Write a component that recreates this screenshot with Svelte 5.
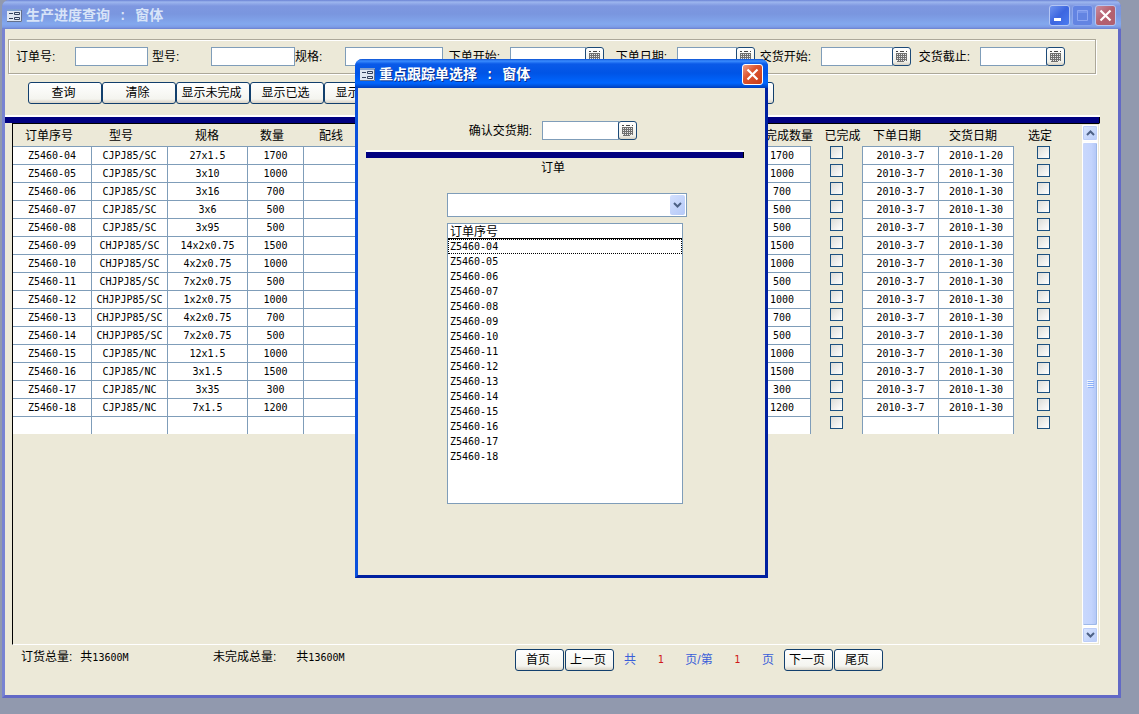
<script lang="ts">
    type Order = {
        id: string;
        model: string;
        spec: string;
        qty: string;
        ordered: string;
        due: string;
        done: boolean;
        selected: boolean;
    };

    const source = [
        ['04', 'CJPJ85/SC', '27x1.5', '1700', '2010-1-20'],
        ['05', 'CJPJ85/SC', '3x10', '1000', '2010-1-30'],
        ['06', 'CJPJ85/SC', '3x16', '700', '2010-1-30'],
        ['07', 'CJPJ85/SC', '3x6', '500', '2010-1-30'],
        ['08', 'CJPJ85/SC', '3x95', '500', '2010-1-30'],
        ['09', 'CHJPJ85/SC', '14x2x0.75', '1500', '2010-1-30'],
        ['10', 'CHJPJ85/SC', '4x2x0.75', '1000', '2010-1-30'],
        ['11', 'CHJPJ85/SC', '7x2x0.75', '500', '2010-1-30'],
        ['12', 'CHJPJP85/SC', '1x2x0.75', '1000', '2010-1-30'],
        ['13', 'CHJPJP85/SC', '4x2x0.75', '700', '2010-1-30'],
        ['14', 'CHJPJP85/SC', '7x2x0.75', '500', '2010-1-30'],
        ['15', 'CJPJ85/NC', '12x1.5', '1000', '2010-1-30'],
        ['16', 'CJPJ85/NC', '3x1.5', '1500', '2010-1-30'],
        ['17', 'CJPJ85/NC', '3x35', '300', '2010-1-30'],
        ['18', 'CJPJ85/NC', '7x1.5', '1200', '2010-1-30']
    ];

    const orders: Order[] = source.map(([no, model, spec, qty, due]) => ({
        id: 'Z5460-' + no,
        model,
        spec,
        qty,
        ordered: '2010-3-7',
        due,
        done: false,
        selected: false
    }));

    // the last row is the empty "new record" row
    const blank: Order = { id: '', model: '', spec: '', qty: '', ordered: '', due: '', done: false, selected: false };
    let rows = $state([...orders, blank]);

    const fields = [
        { id: 'order-no', label: '订单号:' },
        { id: 'model', label: '型号:' },
        { id: 'spec', label: '规格:', flush: true },
        { id: 'order-from', label: '下单开始:', date: true },
        { id: 'order-to', label: '下单日期:', date: true },
        { id: 'due-from', label: '交货开始:', date: true },
        { id: 'due-to', label: '交货截止:', date: true }
    ];
    let filters: Record<string, string> = $state({});

    const actions = ['查询', '清除', '显示未完成', '显示已选', '显示全部', '重点跟踪'];

    let confirmDate = $state('');
    let picked = $state('');
    let focused = $state(0);
    let dialogOpen = $state(true);

    function clearFilters() {
        for (const f of fields) filters[f.id] = '';
    }
</script>

{#snippet formIcon()}
    <svg class="form-icon" width="15" height="13" viewBox="0 0 15 13" aria-hidden="true">
        <rect x="0" y="0" width="15" height="13" fill="#dfe6f2" />
        <rect x="0" y="0" width="15" height="2" fill="#7f9fd0" />
        <path d="M2 4.5h4M2 9.5h4M7.5 3.5h5v2h-5zM7.5 8.5h5v2h-5z" fill="none" stroke="#33415f" />
        <path d="M14.5 1v11.5H0" fill="none" stroke="#63708c" />
    </svg>
{/snippet}

{#snippet calendarIcon()}
    <svg width="12" height="12" viewBox="0 0 12 12" aria-hidden="true">
        <path d="M0 .5h2M4 .5h4M10 .5h1" stroke="#444" />
        <path d="M0 2h11v8H8v1H1V9H0z" fill="#6f6f6f" />
        <path d="M1 3.5h9M1 5.5h9M1 7.5h9M1 9.5h9" stroke="#e6e6e6" stroke-dasharray="1 1" />
    </svg>
{/snippet}

{#snippet closeIcon()}
    <svg width="13" height="13" viewBox="0 0 13 13" aria-hidden="true">
        <path d="M1.5 1.5l10 10M11.5 1.5l-10 10" stroke="#fff" stroke-width="2.2" />
    </svg>
{/snippet}

<div class="desktop">
    <main class="window">
        <header class="titlebar inactive">
            {@render formIcon()}
            <h1>生产进度查询 : 窗体</h1>
            <div class="caption-buttons">
                <button class="caption min" aria-label="最小化">
                    <svg width="13" height="13" viewBox="0 0 13 13" aria-hidden="true"><rect x="1" y="9" width="7" height="3" fill="#fff" /></svg>
                </button>
                <button class="caption max" aria-label="最大化" disabled>
                    <svg width="13" height="13" viewBox="0 0 13 13" aria-hidden="true">
                        <path d="M1.5 1.5h10v10h-10zM1 3h11" fill="none" stroke="#8ea7f2" />
                    </svg>
                </button>
                <button class="caption close" aria-label="关闭">{@render closeIcon()}</button>
            </div>
        </header>

        <form class="filters" onsubmit={(e) => e.preventDefault()}>
            {#each fields as f}
                <label for={f.id} class:flush={f.flush} class:date={f.date}>{f.label}</label>
                <div class="control">
                    <input type="text" id={f.id} bind:value={filters[f.id]} />
                    {#if f.date}
                        <button type="button" class="calendar" aria-label="选择日期">{@render calendarIcon()}</button>
                    {/if}
                </div>
            {/each}
        </form>

        <div class="actions">
            {#each actions as action}
                <button class="push" onclick={() => action === '清除' && clearFilters()}>{action}</button>
            {/each}
        </div>

        <div class="rule"></div>

        <section class="subform">
            <div class="sheet">
                <table>
                    <colgroup>
                        <col class="w-id" /><col class="w-model" /><col class="w-spec" /><col class="w-qty" />
                        <col class="w-qty" /><col /><col class="w-left" /><col class="w-done" />
                        <col class="w-model" /><col class="w-model" /><col class="w-left" />
                    </colgroup>
                    <thead>
                        <tr>
                            <th>订单序号</th>
                            <th class="near">型号</th>
                            <th class="mid">规格</th>
                            <th>数量</th>
                            <th class="mid">配线</th>
                            <th>备注</th>
                            <th class="mid">未完成数量</th>
                            <th class="far">已完成</th>
                            <th>下单日期</th>
                            <th>交货日期</th>
                            <th>选定</th>
                        </tr>
                    </thead>
                    <tbody>
                        {#each rows as row}
                            <tr>
                                <td class="first">{row.id}</td>
                                <td>{row.model}</td>
                                <td>{row.spec}</td>
                                <td>{row.qty}</td>
                                <td></td>
                                <td></td>
                                <td class="last">{row.qty}</td>
                                <td class="check"><input type="checkbox" aria-label="已完成" bind:checked={row.done} /></td>
                                <td>{row.ordered}</td>
                                <td class="last">{row.due}</td>
                                <td class="check"><input type="checkbox" aria-label="选定" bind:checked={row.selected} /></td>
                            </tr>
                        {/each}
                    </tbody>
                </table>
            </div>
            <div class="scrollbar">
                <button class="arrow" aria-label="向上滚动">
                    <svg width="9" height="6" viewBox="0 0 9 6" aria-hidden="true"><path d="M1 5l3.5-3.5L8 5" fill="none" stroke="#4d6185" stroke-width="2" /></svg>
                </button>
                <div class="thumb">
                    <svg width="7" height="8" viewBox="0 0 7 8" aria-hidden="true">
                        <path d="M0 .5h6M0 2.5h6M0 4.5h6M0 6.5h6" stroke="#eef4fe" />
                        <path d="M1 1.5h6M1 3.5h6M1 5.5h6M1 7.5h6" stroke="#8cb0f8" />
                    </svg>
                </div>
                <button class="arrow" aria-label="向下滚动">
                    <svg width="9" height="6" viewBox="0 0 9 6" aria-hidden="true"><path d="M1 1l3.5 3.5L8 1" fill="none" stroke="#4d6185" stroke-width="2" /></svg>
                </button>
            </div>
        </section>

        <footer>
            <p class="total"><span>订货总量:</span><span>共<b>13600M</b></span></p>
            <p class="total open"><span>未完成总量:</span><span>共<b>13600M</b></span></p>
            <nav>
                <button class="push page">首页</button>
                <button class="push page">上一页</button>
                <p class="pages">
                    <span>共</span><em>1</em><span>页/第</span><em>1</em><span>页</span>
                </p>
                <button class="push page">下一页</button>
                <button class="push page">尾页</button>
            </nav>
        </footer>
    </main>

    {#if dialogOpen}
        <div class="dialog" role="dialog" aria-labelledby="dialog-title">
            <header class="titlebar">
                {@render formIcon()}
                <h2 id="dialog-title">重点跟踪单选择 : 窗体</h2>
                <div class="caption-buttons">
                    <button class="caption close" aria-label="关闭" onclick={() => (dialogOpen = false)}>{@render closeIcon()}</button>
                </div>
            </header>
            <div class="dialog-body">
                <div class="confirm">
                    <label for="confirm-date">确认交货期:</label>
                    <div class="control">
                        <input type="text" id="confirm-date" bind:value={confirmDate} />
                        <button class="calendar" aria-label="选择日期">{@render calendarIcon()}</button>
                    </div>
                </div>
                <div class="rule"></div>
                <label class="order-label" for="order-pick">订单</label>
                <div class="picker">
                    <div class="combo">
                        <select id="order-pick" bind:value={picked}>
                            <option value=""></option>
                            {#each orders as o}
                                <option value={o.id}>{o.id}</option>
                            {/each}
                        </select>
                        <span class="drop">
                            <svg width="9" height="6" viewBox="0 0 9 6" aria-hidden="true"><path d="M1 1l3.5 3.5L8 1" fill="none" stroke="#4d6185" stroke-width="2" /></svg>
                        </span>
                    </div>
                    <div class="listbox">
                        <div class="list-head" id="list-head">订单序号</div>
                        <ul role="listbox" aria-labelledby="list-head">
                            {#each orders as o, i}
                                <li
                                    role="option"
                                    tabindex="-1"
                                    aria-selected={focused === i}
                                    class:focused={focused === i}
                                    onclick={() => (focused = i)}
                                    onkeydown={(e) => e.key === 'Enter' && (focused = i)}
                                >{o.id}</li>
                            {/each}
                        </ul>
                    </div>
                </div>
            </div>
        </div>
    {/if}
</div>

<style>
    :global(body) {
        background: #9199ae;
    }

    .desktop {
        position: relative;
        display: flex;
        height: 100vh;
        min-height: 620px;
        font-family: "Liberation Sans", "Noto Sans CJK SC", sans-serif;
        font-size: 12px;
        line-height: 16px;
        color: #000;
    }

    .desktop *,
    .desktop {
        box-sizing: border-box;
    }

    button,
    input,
    select {
        font: inherit;
        color: inherit;
        margin: 0;
        padding: 0;
    }

    p, h1, h2, ul {
        margin: 0;
        padding: 0;
    }

    /* window chrome */
    .window {
        flex: 1;
        display: flex;
        flex-direction: column;
        min-width: 0;
        margin: 0 18px 16px 2px;
        background: #ece9d8;
        border: solid #7883d2;
        border-width: 0 3px 3px;
        border-right-color: #6269c6;
        border-bottom-color: #6269c6;
        border-radius: 8px 8px 0 0;
    }

    .titlebar {
        display: flex;
        align-items: center;
        flex: none;
        height: 29px;
        margin: 0 -3px;
        padding: 2px 5px 0 5px;
        border-radius: 7px 7px 0 0;
        background: linear-gradient(#0a4fd0 0, #3a8cff 2px, #0a5ae8 5px, #0054e6 14px, #0066ff 24px, #0050d8 27px, #003cb8 29px);
    }

    .titlebar.inactive {
        background: linear-gradient(#6a82d4 0, #9db6ee 2px, #7e97e0 6px, #7a96df 14px, #83a8ee 24px, #7d9ce6 27px, #6b80cf 29px);
    }

    .titlebar h1,
    .titlebar h2 {
        margin-left: 4px;
        font-family: "Liberation Mono", "Noto Sans CJK SC", sans-serif;
        font-size: 14px;
        line-height: 20px;
        font-weight: bold;
        color: #fff;
        white-space: nowrap;
        text-shadow: 1px 1px 0 #0b2f8c;
    }

    .titlebar.inactive h1 {
        color: #d8e4f8;
        text-shadow: none;
    }

    .caption-buttons {
        display: flex;
        gap: 2px;
        margin-left: auto;
    }

    .caption {
        display: flex;
        align-items: center;
        justify-content: center;
        width: 21px;
        height: 21px;
        border: 1px solid #fff;
        border-radius: 3px;
        background: linear-gradient(135deg, #f0a088, #dd5530 40%, #c83c18);
    }

    .inactive .caption {
        border-color: #b4c6f4;
        background: linear-gradient(135deg, #6f93ee, #3c66e0 50%, #4a7bf0);
    }

    .inactive .caption.max {
        border-color: #8da6ec;
        background: #6384e2;
    }

    .inactive .caption.close {
        background: linear-gradient(135deg, #c88ca0, #b5606e 50%, #b06070);
    }

    /* filter row */
    .filters {
        display: grid;
        grid-template-columns:
            63fr 73fr 63fr 84fr 50fr 98fr 67fr 94fr 73fr 78fr
            66fr 90fr 69fr 85fr;
        align-items: center;
        height: 35px;
        margin: 10px 22px 0 3px;
        padding: 0 30px 0 3px;
        border: 1px solid #aca899;
        box-shadow: 1px 1px 0 #fff, inset 1px 1px 0 #fff;
    }

    .filters > label {
        padding-left: 4px;
        white-space: nowrap;
    }

    .filters > label.flush {
        padding-left: 0;
    }

    .filters > label.date {
        padding: 0 10px 0 0;
        text-align: right;
    }

    .control {
        display: flex;
        min-width: 0;
    }

    .control input {
        flex: 1;
        min-width: 0;
        height: 19px;
        padding: 0 2px;
        border: 1px solid #7f9db9;
        background: #fff;
    }

    .calendar {
        display: flex;
        align-items: center;
        justify-content: center;
        flex: none;
        width: 19px;
        height: 19px;
        margin-left: -1px;
        border: 1px solid #1c4a78;
        border-radius: 3px;
        background: linear-gradient(#fff, #f0f0ea 80%, #d8d2c4);
    }

    .push {
        flex: none;
        width: 74px;
        height: 22px;
        padding-right: 3px;
        border: 1px solid #123f6d;
        border-radius: 3px;
        background: linear-gradient(#fff, #f4f4ef 80%, #d9d3c6);
        line-height: 16px;
        white-space: nowrap;
    }

    .actions {
        display: flex;
        width: 746px;
        margin: 8px 0 0 23px;
    }

    .actions .push:last-child {
        margin-left: auto;
    }

    .rule {
        height: 6px;
        border-right: 1px solid #000;
        background: #000080;
        box-shadow: 0 -2px 0 #fff;
    }

    .window > .rule {
        margin: 13px 18px 0 0;
    }

    /* order sheet */
    .subform {
        flex: 1;
        display: flex;
        min-height: 0;
        margin: 0 18px 0 7px;
        border: 1px solid #fff;
        border-left-color: #000;
        border-top-color: #000;
        padding: 1px 1px 1px 0;
    }

    .sheet {
        flex: 1;
        min-width: 0;
        padding-right: 10px;
    }

    table {
        width: 100%;
        table-layout: fixed;
        border-collapse: separate;
        border-spacing: 0;
    }

    .w-id { width: 78px; }
    .w-model { width: 76px; }
    .w-spec { width: 80px; }
    .w-qty { width: 56px; }
    .w-left { width: 58px; }
    .w-done { width: 51px; }

    th {
        height: 21px;
        padding: 0 6px 0 0;
        font-weight: normal;
        line-height: 16px;
        white-space: nowrap;
    }

    th.near { padding-right: 16px; }
    th.mid { padding-right: 0; }
    th.far { padding: 0 0 0 12px; }

    td {
        height: 18px;
        padding: 0;
        border-top: 1px solid #7f9db9;
        border-left: 1px solid #7f9db9;
        background: #fff;
        font-family: "DejaVu Sans Mono", monospace;
        font-size: 10px;
        line-height: 16px;
        text-align: center;
        white-space: nowrap;
    }

    td.first {
        border-left: 0;
    }

    td.last {
        border-right: 1px solid #7f9db9;
    }

    td.check {
        border: 0;
        background: none;
        vertical-align: top;
    }

    td.check input {
        appearance: none;
        display: block;
        width: 13px;
        height: 13px;
        margin: 0 auto;
        border: 1px solid #1c5180;
        background: linear-gradient(135deg, #dcdcd7, #fff);
    }

    td.check input:checked {
        background: #21a121;
    }

    .scrollbar {
        display: flex;
        flex-direction: column;
        gap: 1px;
        width: 16px;
        background: #fdfdfa;
    }

    .arrow {
        display: flex;
        align-items: center;
        justify-content: center;
        height: 16px;
        border: 1px solid #fff;
        border-radius: 2px;
        background: linear-gradient(135deg, #dbe6fe, #b8ccf9);
        box-shadow: inset 0 0 0 1px #bccdf8;
    }

    .thumb {
        flex: 1;
        display: flex;
        align-items: center;
        justify-content: center;
        border: 1px solid #fff;
        border-radius: 2px;
        background: linear-gradient(90deg, #c9d8fc, #c3d4fd 60%, #b2c6f5);
        box-shadow: inset -1px -1px 0 #9db8e8;
    }

    /* totals and paging */
    footer {
        display: flex;
        flex: none;
        align-items: flex-start;
        height: 50px;
        padding: 4px 0 0 16px;
        white-space: nowrap;
    }

    .total {
        display: flex;
        gap: 8px;
        width: 192px;
    }

    .total.open {
        gap: 20px;
        width: 302px;
    }

    .total b {
        font-family: "DejaVu Sans Mono", monospace;
        font-size: 10px;
        font-weight: normal;
    }

    nav {
        display: flex;
        gap: 1px;
    }

    .push.page {
        width: 49px;
    }

    .pages {
        display: flex;
        justify-content: space-between;
        width: 168px;
        padding: 3px 9px 0;
        color: #3a5fd9;
    }

    .pages em {
        font-family: "DejaVu Sans Mono", monospace;
        font-size: 10px;
        font-style: normal;
        color: #d01818;
    }

    /* tracking dialog, floats over the main window */
    .dialog {
        position: absolute;
        left: 355px;
        top: 59px;
        width: 413px;
        background: #ece9d8;
        border: solid #0a50dc;
        border-width: 0 3px 3px;
        border-right-color: #0020a0;
        border-bottom-color: #0020a0;
        border-radius: 8px 8px 0 0;
    }

    .dialog-body {
        padding: 33px 21px 71px 8px;
    }

    .confirm {
        display: flex;
        align-items: center;
        justify-content: center;
        gap: 10px;
        margin-bottom: 12px;
        padding-right: 4px;
    }

    .confirm .control {
        width: 95px;
    }

    .order-label {
        display: block;
        margin: 2px 4px 17px 0;
        text-align: center;
    }

    .picker {
        width: 240px;
        margin-left: 81px;
    }

    .combo {
        position: relative;
        margin-bottom: 6px;
    }

    .combo select {
        appearance: none;
        display: block;
        width: 100%;
        height: 24px;
        padding: 0 20px 0 3px;
        border: 1px solid #7f9db9;
        border-radius: 0;
        background: #fff;
    }

    .drop {
        position: absolute;
        top: 2px;
        right: 2px;
        bottom: 2px;
        display: flex;
        align-items: center;
        justify-content: center;
        width: 15px;
        border-radius: 2px;
        background: linear-gradient(135deg, #d3e0fe, #b5c9f8);
        pointer-events: none;
    }

    .listbox {
        width: 236px;
        height: 281px;
        border: 1px solid #7f9db9;
        background: #fff;
    }

    .list-head {
        height: 15px;
        padding-left: 2px;
        border-bottom: 1px solid #000;
        line-height: 16px;
    }

    .listbox ul {
        list-style: none;
        font-family: "DejaVu Sans Mono", monospace;
        font-size: 10px;
    }

    .listbox li {
        height: 15px;
        padding-left: 2px;
        line-height: 16px;
    }

    .listbox li.focused {
        outline: 1px dotted #000;
        outline-offset: -1px;
    }
</style>
